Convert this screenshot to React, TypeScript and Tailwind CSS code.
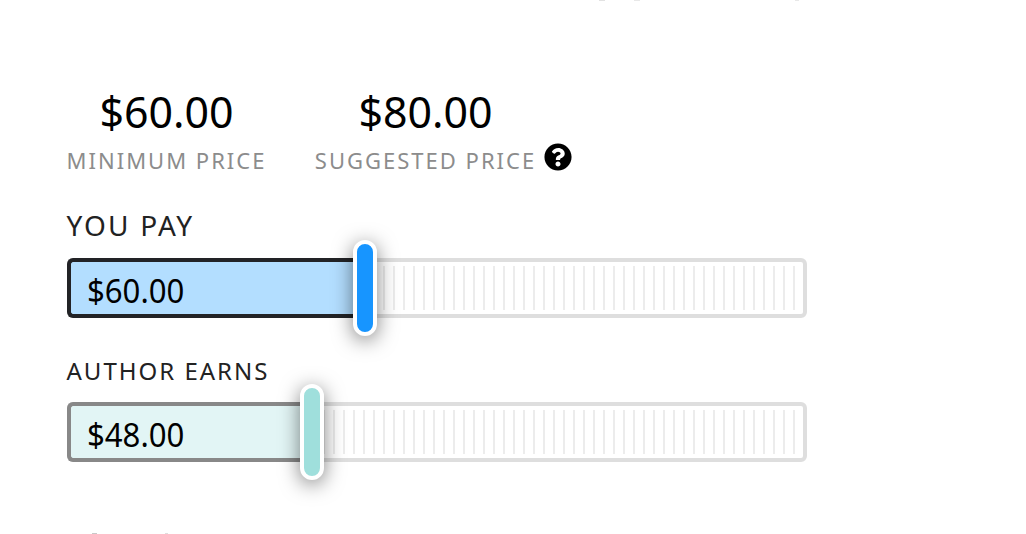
import type { ReactNode } from "react";
import { FaQuestionCircle } from "react-icons/fa";

type SliderProps = {
  amount: string;
  fill: string;
  handle: string;
};

function Slider({ amount, fill, handle }: SliderProps) {
  return (
    <div className="grid h-[60px] w-[740px] items-center *:col-start-1 *:row-start-1">
      <div className="flex h-[60px] items-center justify-end rounded-[6px] border-4 border-[#dedede] bg-white pr-2">
        <div className="h-[44px] w-[492px] bg-[repeating-linear-gradient(to_left,#ececec_0px,#ececec_2px,transparent_2px,transparent_10px)]" />
      </div>
      <div className="flex h-[60px] items-center">
        <div className={`flex h-[60px] items-center rounded-l-[6px] border-4 border-r-0 pl-4 pt-[5px] ${fill}`}>
          <span className="origin-left scale-x-[0.973] text-[32px] leading-[44px] text-black">{amount}</span>
        </div>
        <div
          className={`-ml-3 h-[96px] w-6 shrink-0 rounded-full border-4 border-white shadow-[0_4px_20px_rgba(0,0,0,0.5)] ${handle}`}
        />
      </div>
    </div>
  );
}

function Price({ amount, children }: { amount: string; children: ReactNode }) {
  return (
    <div className="flex flex-col gap-1 whitespace-nowrap text-center">
      <div className="origin-center scale-x-[0.975] pr-px text-[44px] leading-[60px] text-black">{amount}</div>
      <div className="text-[22px] leading-[30px] tracking-[2px] text-[#8c8c8c]">{children}</div>
    </div>
  );
}

export default function App() {
  return (
    <main className="flex h-[534px] w-[1026px] flex-col overflow-hidden bg-white font-['Noto_Sans',sans-serif]">
      <div className="flex h-px pl-[599px]">
        <div className="w-[6px] bg-[#e2e2e2]" />
        <div className="ml-[29px] w-[6px] bg-[#e8e8e8]" />
        <div className="ml-[155px] w-[4px] bg-[#e8e8e8]" />
      </div>
      <div className="flex flex-1 flex-col pl-[67px] pt-20">
        <div className="-ml-[0.5px] flex h-[125px]">
          <div className="w-[248px]">
            <div className="w-[200px]">
              <Price amount="$60.00">MINIMUM PRICE</Price>
            </div>
          </div>
          <div className="flex items-start gap-[7px]">
            <div className="w-[222px]">
              <Price amount="$80.00">SUGGESTED PRICE</Price>
            </div>
            <div className="pt-[62px]">
              <FaQuestionCircle className="size-7 text-black" />
            </div>
          </div>
        </div>
        <h2 className="-ml-[0.5px] h-[52px] text-[28px] leading-[38px] tracking-[2.2px] text-[#222]">YOU PAY</h2>
        <Slider amount="$60.00" fill="w-[298px] border-[#222326] bg-[#b3deff]" handle="bg-[#1795ff]" />
        <h2 className="-ml-[0.5px] h-[84px] pt-[36px] text-[24px] leading-[34px] tracking-[2px] text-[#222]">
          AUTHOR EARNS
        </h2>
        <Slider amount="$48.00" fill="w-[245px] border-[#888] bg-[#e2f5f5]" handle="bg-[#9fdfdc]" />
      </div>
      <div className="flex h-px pl-[92px]">
        <div className="w-[5px] bg-[#c8c8c8]" />
        <div className="ml-[68px] w-[3px] bg-[#dedede]" />
      </div>
    </main>
  );
}
